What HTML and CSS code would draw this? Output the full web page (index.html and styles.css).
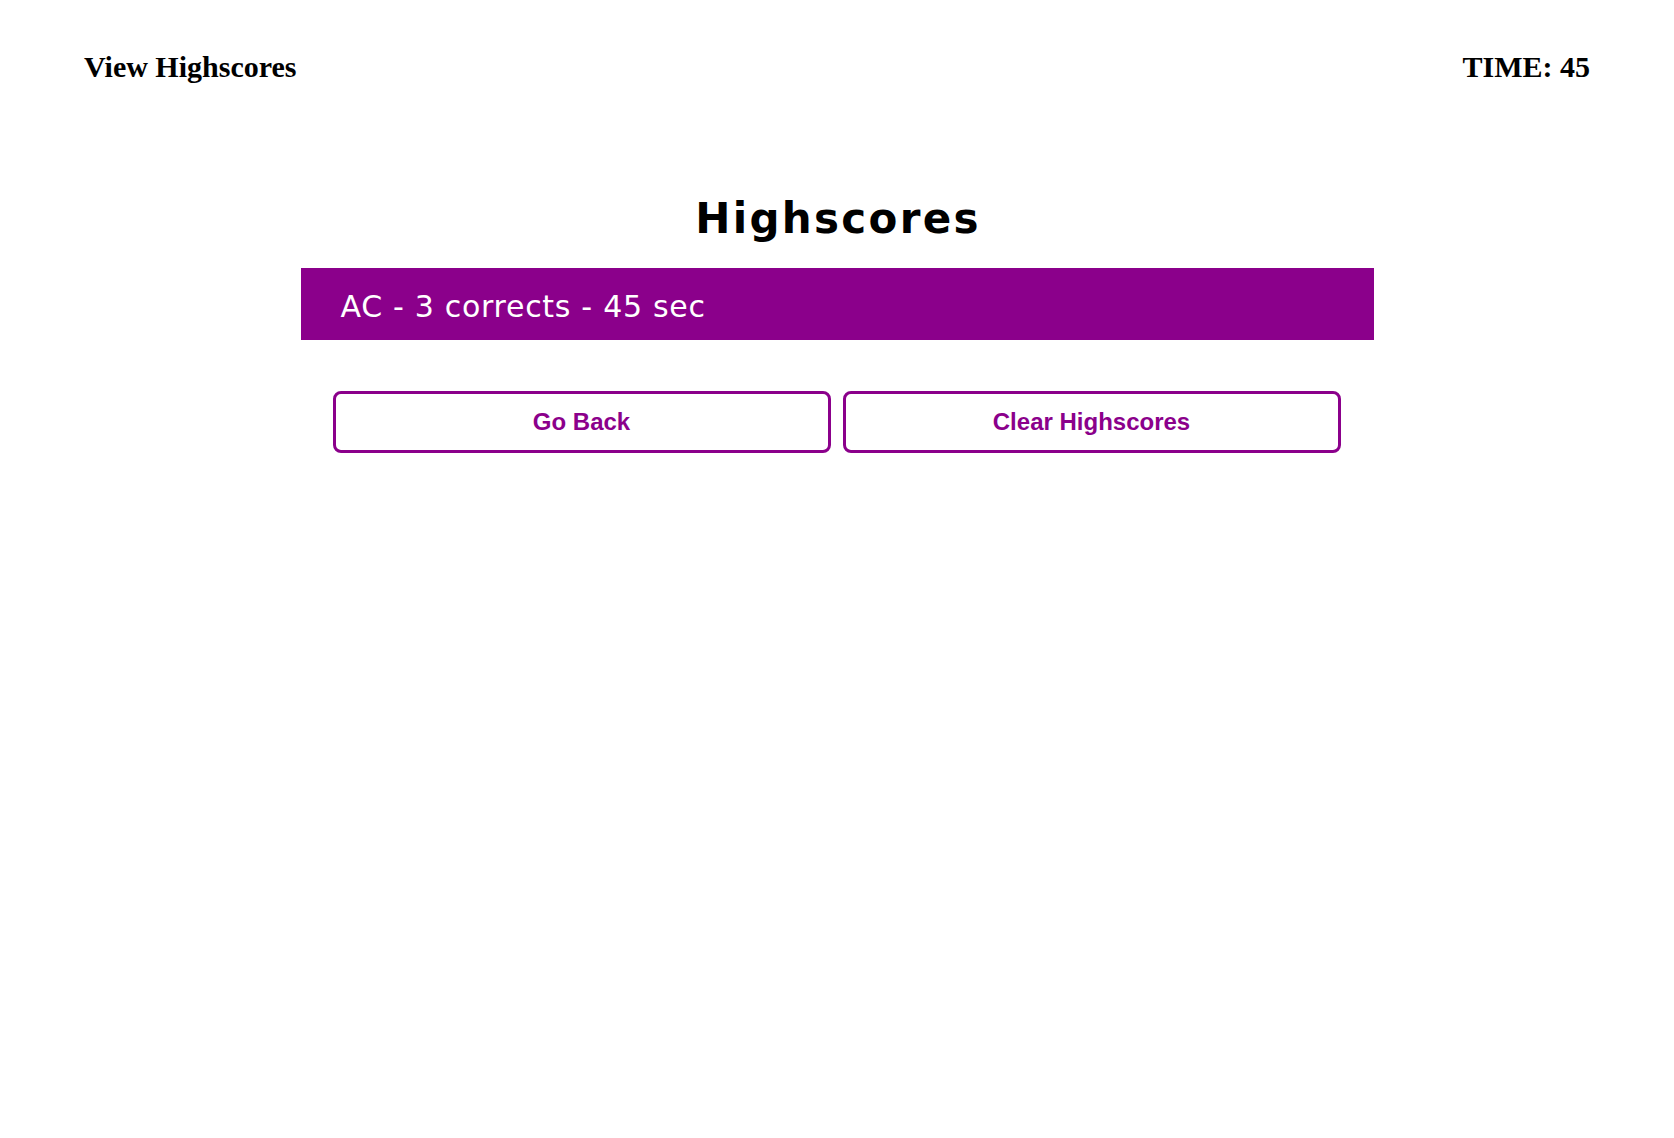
FILE: index.html
```html
<!DOCTYPE html>
<html lang="en">
<head>
<meta charset="utf-8">
<title>Highscores</title>
<link rel="stylesheet" href="styles.css">
</head>
<body>
<header class="topbar">
  <a class="view-link" href="#">View Highscores</a>
  <span class="timer">TIME: 45</span>
</header>
<main class="scores">
  <h1 class="title">Highscores</h1>
  <ol class="score-list">
    <li class="score-item">AC - 3 corrects - 45 sec</li>
  </ol>
  <div class="actions">
    <button class="btn" type="button">Go Back</button>
    <button class="btn" type="button">Clear Highscores</button>
  </div>
</main>
</body>
</html>
```
FILE: styles.css
```css
* { box-sizing: border-box; }
html, body { margin: 0; padding: 0; background: #fff; }
body { color: #000; }

.topbar {
  display: flex;
  justify-content: space-between;
  align-items: baseline;
  padding: 50px 84px 0 84px;
  font-family: "Liberation Serif", "Times New Roman", serif;
  font-weight: bold;
  font-size: 30px;
  line-height: 34px;
}
.view-link { color: #000; text-decoration: none; }
.timer { color: #000; }

.scores {
  width: 1073px;
  margin: 0 auto;
  display: flex;
  flex-direction: column;
}

.title {
  margin: 111px 0 0;
  padding-left: 2px;
  text-align: center;
  font-family: "DejaVu Sans", sans-serif;
  font-weight: bold;
  font-size: 42px;
  line-height: 48px;
  letter-spacing: 2.3px;
}

.score-list {
  list-style: none;
  margin: 25px 0 0;
  padding: 0;
}
.score-item {
  height: 72px;
  padding: 21px 40px 16px;
  background: #8b008b;
  color: #fff;
  font-family: "DejaVu Sans", sans-serif;
  font-size: 30px;
  line-height: 35px;
  letter-spacing: 0.7px;
}

.actions {
  display: flex;
  gap: 12px;
  padding: 0 33px 0 32px;
  margin-top: 51px;
}
.btn {
  flex: 1;
  height: 62px;
  background: #fff;
  border: 3px solid #8b008b;
  border-radius: 8px;
  color: #8b008b;
  font-family: "Liberation Sans", Arial, sans-serif;
  font-weight: bold;
  font-size: 24px;
  cursor: pointer;
}
```
